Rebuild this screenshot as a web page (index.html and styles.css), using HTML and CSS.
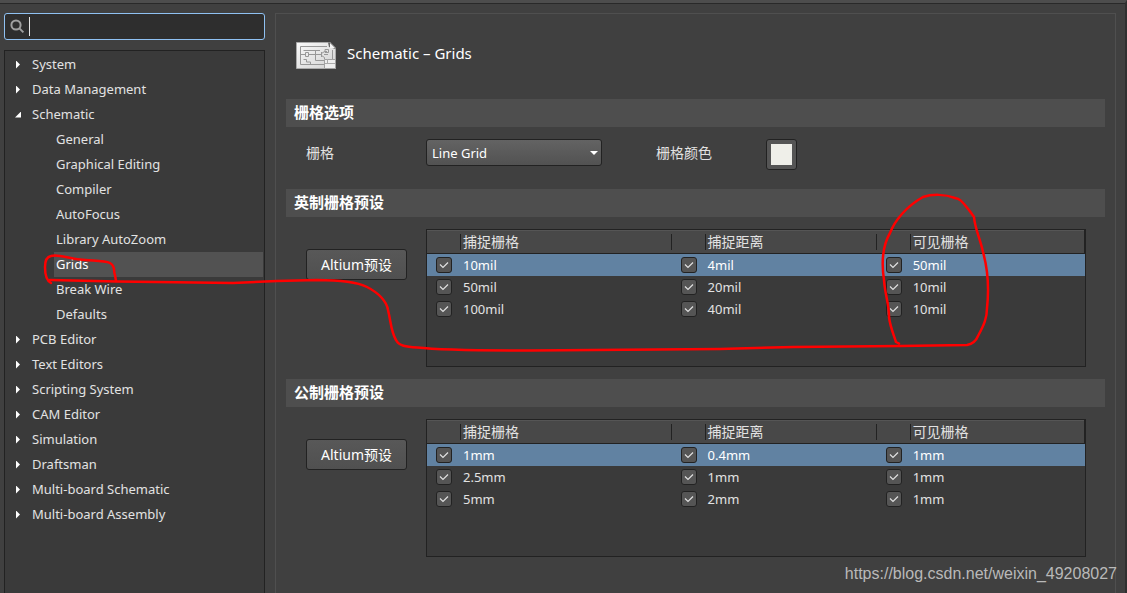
FILE: index.html
```html
<!DOCTYPE html>
<html lang="zh-CN">
<head>
<meta charset="utf-8">
<title>Schematic – Grids</title>
<link rel="stylesheet" href="styles.css">
</head>
<body>
<div class="window">
  <aside class="sidebar">
    <label class="search">
      <svg class="search-icon" viewBox="0 0 15 15" width="15" height="15" aria-hidden="true"><circle cx="6" cy="6" r="4.6"/><path d="M9.4 9.4 13.4 13.4"/></svg>
      <span class="caret"></span>
      <input class="search-input" type="text" aria-label="Search">
    </label>
    <nav class="tree">
      <a class="node" href="#">System</a>
      <a class="node" href="#">Data Management</a>
      <a class="node open" href="#">Schematic</a>
      <div class="children">
        <a class="leaf" href="#">General</a>
        <a class="leaf" href="#">Graphical Editing</a>
        <a class="leaf" href="#">Compiler</a>
        <a class="leaf" href="#">AutoFocus</a>
        <a class="leaf" href="#">Library AutoZoom</a>
        <a class="leaf selected" href="#">Grids</a>
        <a class="leaf" href="#">Break Wire</a>
        <a class="leaf" href="#">Defaults</a>
      </div>
      <a class="node" href="#">PCB Editor</a>
      <a class="node" href="#">Text Editors</a>
      <a class="node" href="#">Scripting System</a>
      <a class="node" href="#">CAM Editor</a>
      <a class="node" href="#">Simulation</a>
      <a class="node" href="#">Draftsman</a>
      <a class="node" href="#">Multi-board Schematic</a>
      <a class="node" href="#">Multi-board Assembly</a>
    </nav>
  </aside>

  <main class="panel">
    <header class="page-head">
      <svg viewBox="0 0 40 27" width="40" height="27" aria-hidden="true">
        <defs><linearGradient id="paper" x2="1" y2="1"><stop stop-color="#fafafa"/><stop offset="1" stop-color="#d2d2d2"/></linearGradient></defs>
        <path d="M.5 .5H34.5L39.5 6V26.5H.5Z" fill="url(#paper)" stroke="#aaa"/>
        <path d="M32 .5H35L39.5 5.5V7L33 5Z" fill="#686868"/><path d="M34 1 39 6H34Z" fill="#f4f4f4"/>
        <g fill="none" stroke="#989898"><path d="M31 4.5H4.5V22.5H28M36.5 8V17"/><path d="M4.500 12.500H9M13 12.500H25.500M9.500 10.500H12.500V14.500H9.500ZM7.500 8.500H24M19.500 8V18.500H28M7.500 17.500H10.500V20H14.500V22M25.500 10V15M25.500 11.500 28.500 9.500H31M25.500 13.500 28.500 15.500V17M29 7.500H32.500V10.500H29ZM28 12.500H32"/></g>
        <path d="M28.500 17.500H39.500V26.500H28.500Z" fill="#eee" stroke="#a2a2a2"/><path d="M29 21.500H39M31.500 17V21" stroke="#aaa"/>
      </svg>
      <h1 class="page-title">Schematic – Grids</h1>
    </header>

    <section class="section">
      <h2 class="band">栅格选项</h2>
      <div class="options">
        <label class="option-label" for="grid">栅格</label>
        <select class="combo" id="grid"><option>Line Grid</option></select>
        <label class="color-label" for="color">栅格颜色</label>
        <button class="swatch" id="color" type="button"><span class="chip"></span></button>
      </div>
    </section>

    <section class="section">
      <h2 class="band">英制栅格预设</h2>
      <div class="preset">
        <button class="preset-button" type="button">Altium预设</button>
        <div class="table-box">
          <table class="grid-table">
            <thead><tr><th class="tick"></th><th class="snap">捕捉栅格</th><th class="tick"></th><th class="dist">捕捉距离</th><th class="tick"></th><th class="last">可见栅格</th></tr></thead>
            <tbody>
              <tr class="current"><td><input type="checkbox" id="a1" checked></td><td><label for="a1">10mil</label></td><td><input type="checkbox" id="a2" checked></td><td><label for="a2">4mil</label></td><td><input type="checkbox" id="a3" checked></td><td><label for="a3">50mil</label></td></tr>
              <tr><td><input type="checkbox" id="b1" checked></td><td><label for="b1">50mil</label></td><td><input type="checkbox" id="b2" checked></td><td><label for="b2">20mil</label></td><td><input type="checkbox" id="b3" checked></td><td><label for="b3">10mil</label></td></tr>
              <tr><td><input type="checkbox" id="c1" checked></td><td><label for="c1">100mil</label></td><td><input type="checkbox" id="c2" checked></td><td><label for="c2">40mil</label></td><td><input type="checkbox" id="c3" checked></td><td><label for="c3">10mil</label></td></tr>
            </tbody>
          </table>
        </div>
      </div>
    </section>

    <section class="section">
      <h2 class="band">公制栅格预设</h2>
      <div class="preset">
        <button class="preset-button" type="button">Altium预设</button>
        <div class="table-box">
          <table class="grid-table">
            <thead><tr><th class="tick"></th><th class="snap">捕捉栅格</th><th class="tick"></th><th class="dist">捕捉距离</th><th class="tick"></th><th class="last">可见栅格</th></tr></thead>
            <tbody>
              <tr class="current"><td><input type="checkbox" id="d1" checked></td><td><label for="d1">1mm</label></td><td><input type="checkbox" id="d2" checked></td><td><label for="d2">0.4mm</label></td><td><input type="checkbox" id="d3" checked></td><td><label for="d3">1mm</label></td></tr>
              <tr><td><input type="checkbox" id="e1" checked></td><td><label for="e1">2.5mm</label></td><td><input type="checkbox" id="e2" checked></td><td><label for="e2">1mm</label></td><td><input type="checkbox" id="e3" checked></td><td><label for="e3">1mm</label></td></tr>
              <tr><td><input type="checkbox" id="f1" checked></td><td><label for="f1">5mm</label></td><td><input type="checkbox" id="f2" checked></td><td><label for="f2">2mm</label></td><td><input type="checkbox" id="f3" checked></td><td><label for="f3">1mm</label></td></tr>
            </tbody>
          </table>
        </div>
      </div>
    </section>
  </main>
</div>

<svg class="marker" viewBox="0 0 1127 593" width="1127" height="593" aria-hidden="true">
  <path d="M51 283C47 281 45 276 45 267C45 261 46 257 51 256C58 254 67 258 80 259.500C92 261 104 260 110 263C116 266 113 271 115 275L116 281"/>
  <path d="M50 280L117 281.500L233 283L277 281L317 280C340 280 357 282 367 287C379 293 387 302 388 310C391 322 391 332 396 340C399 346 406 347 417 347.500C440 350 470 350.500 530 350.500L720 349L793 347L900 346L967 345C973 344 976 341 978 336C984 325 987 318 987 308C989 290 988 270 983 252C980 238 975 229 974 217L969 210C963 203 961 199 955 198C945 194 932 194 923 197C907 206 895 220 890 233C883 245 881 260 884 280C885 295 889 303 889 317C890 326 893 333 896 342L899 343.500"/>
</svg>
<span class="watermark">https://blog.csdn.net/weixin_49208027</span>
</body>
</html>
```
FILE: styles.css
```css
* { box-sizing: border-box; }

body {
  margin: 0;
  height: 100vh;
  overflow: hidden;
  background: #404040;
  color: #e2e2e2;
  font: 13px/20px "Noto Sans", "Noto Sans CJK SC", sans-serif;
}

button, input, select { font: inherit; color: inherit; margin: 0; }

.window {
  display: flex;
  gap: 10px;
  height: 100%;
  padding: 9px 9px 0 4px;
  border-top: 3px solid #4d4d4d;
  border-right: 2px solid #303030;
  box-shadow: inset 0 1px #292929;
}

/* Sidebar */
.sidebar {
  flex: none;
  width: 261px;
  display: flex;
  flex-direction: column;
  gap: 10px;
  padding-top: 1px;
}

.search {
  display: flex;
  align-items: center;
  height: 27px;
  padding: 0 5px;
  border: 1px solid #8fc1f2;
  border-radius: 3px;
  background: #2e2e2e;
}

.search-icon { fill: none; stroke: #a0a0a0; stroke-width: 2; }
.caret { width: 1px; height: 19px; margin-left: 4px; background: #e6e6e6; }
.search-input { flex: 1; min-width: 0; border: 0; padding: 0 4px; background: none; outline: none; }

.tree {
  flex: 1;
  padding: 1px 1px 0 0;
  border: 1px solid #222;
  border-bottom: 0;
  background: #3a3a3a;
}

.node, .leaf {
  display: block;
  height: 25px;
  line-height: 25px;
  color: inherit;
  text-decoration: none;
}

.node { display: flex; align-items: center; padding-left: 11px; }

.node::before {
  content: "";
  width: 4px;
  height: 8px;
  margin-right: 12px;
  background: #fff;
  clip-path: polygon(0 0, 100% 50%, 0 100%);
}

.node.open { padding-left: 10px; }
.node.open::before { width: 6px; height: 6px; margin-right: 11px; clip-path: polygon(100% 0, 100% 100%, 0 100%); }
.children { padding-left: 49px; }
.leaf { padding-left: 2px; }
.leaf.selected { background: #525252; color: #fff; }

/* Settings panel */
.panel {
  flex: 1;
  min-width: 0;
  margin-top: 1px;
  padding: 0 10px;
  border: 1px solid #4f4f4f;
  border-bottom: 0;
}

.page-head { display: flex; align-items: center; gap: 11px; height: 85px; padding: 0 10px 2px; }
.page-title { margin: 0; padding-bottom: 5px; color: #fff; font-size: 15px; font-weight: 400; }

.band {
  margin: 0;
  height: 28px;
  padding-left: 8px;
  background: #4e4e4e;
  color: #fff;
  font-size: 15px;
  font-weight: 700;
  line-height: 26px;
}

.options { display: flex; align-items: flex-start; height: 62px; padding: 12px 20px 0; }
.option-label { width: 120px; font-size: 14px; line-height: 28px; }
.color-label { width: 110px; margin-left: 54px; font-size: 14px; line-height: 28px; }

.combo {
  appearance: none;
  width: 176px;
  height: 27px;
  padding: 0 20px 0 5px;
  border: 1px solid #222;
  border-radius: 3px;
  color: #fff;
  background: url("data:image/svg+xml,%3Csvg xmlns='http://www.w3.org/2000/svg' width='8' height='4'%3E%3Cpath d='M0 0h8L4 4z' fill='white'/%3E%3C/svg%3E") no-repeat right 3px center, linear-gradient(#636363, #525252);
}

.swatch {
  width: 31px;
  height: 31px;
  padding: 4px;
  border: 1px solid #222;
  border-radius: 3px;
  background: #555;
}

.chip { display: block; height: 21px; background: #efefe9; }

.preset { display: flex; align-items: flex-start; height: 162px; padding: 12px 19px 0 20px; }

.preset-button {
  flex: none;
  width: 101px;
  height: 31px;
  margin: 20px 19px 0 0;
  padding: 0;
  border: 1px solid #222;
  border-radius: 3px;
  background: linear-gradient(#585858, #505050);
  color: #fff;
  font-size: 14px;
}

.table-box { flex: 1; height: 138px; border: 1px solid #222; background: #3a3a3a; }

.grid-table { width: 100%; table-layout: fixed; border-collapse: separate; border-spacing: 0; }

.grid-table th {
  height: 24px;
  padding: 0 0 0 2px;
  border-bottom: 1px solid #222;
  background: linear-gradient(#222, #222) no-repeat right 4px / 1px 16px, #484848;
  box-shadow: inset 0 1px #555;
  font-size: 14px;
  font-weight: 400;
  line-height: 22px;
  text-align: left;
}

.grid-table .tick { width: 34px; }
.grid-table .snap { width: 32%; }
.grid-table .dist { width: 26%; }
.grid-table .last { background: #484848; border-right: 1px solid #222; }

.grid-table td { height: 22px; padding: 0 0 0 2px; line-height: 22px; }
.grid-table td:nth-child(odd) { padding-left: 9px; }
.grid-table label { display: block; }
.current td { background: #6182a2; color: #fff; }

.grid-table input {
  appearance: none;
  display: block;
  width: 16px;
  height: 16px;
  border: 1px solid #222;
  border-radius: 3px;
  background: #555;
}

.grid-table input:checked {
  background-image: url("data:image/svg+xml,%3Csvg xmlns='http://www.w3.org/2000/svg' width='14' height='14'%3E%3Cpath d='M3 6.500l3 3 5-5' fill='none' stroke='%23e0e0e0' stroke-width='1.200'/%3E%3C/svg%3E");
}

/* Hand-drawn mark and watermark lie over the window */
.marker {
  position: absolute;
  top: 0;
  left: 0;
  fill: none;
  stroke: #f00;
  stroke-width: 2.500;
  stroke-linecap: round;
  stroke-linejoin: round;
  pointer-events: none;
}

.watermark {
  position: absolute;
  right: 10px;
  bottom: 9px;
  color: #b9b9b9;
  font: 16px/20px "Liberation Sans", Arial, sans-serif;
}
```
